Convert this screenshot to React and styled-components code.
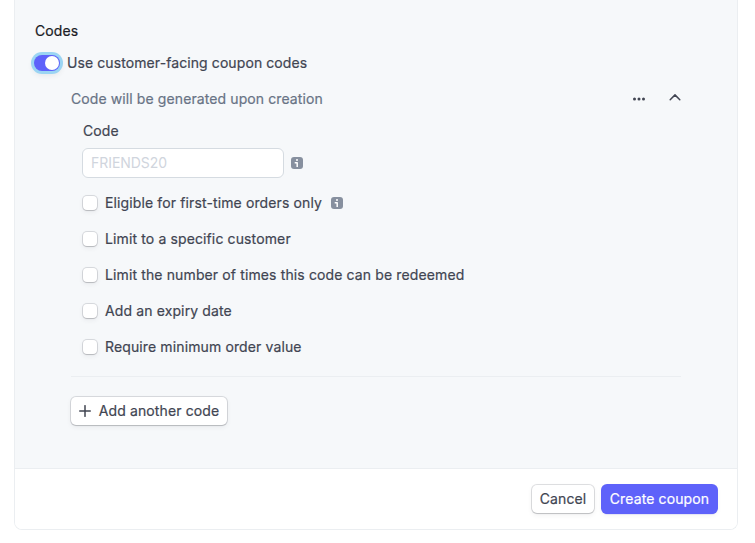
import React from "react";
import styled, { createGlobalStyle } from "styled-components";

const GlobalStyle = createGlobalStyle`
  * { box-sizing: border-box; }
  body {
    margin: 0;
    background: #fff;
    color: #414552;
    font: 400 14px/20px Inter, sans-serif;
    letter-spacing: 0.125px;
    -webkit-text-stroke: 0.2px currentColor;
    -webkit-font-smoothing: antialiased;
  }
`;

const Page = styled.div`
  height: 543px;
  padding: 0 17px 13px 14px;
  overflow: hidden;
`;

const Panel = styled.main`
  height: 530px;
  display: flex;
  flex-direction: column;
  border: 1px solid #ebeef1;
  border-top: 0;
  border-radius: 0 0 8px 8px;
  overflow: hidden;
`;

const Content = styled.section`
  height: 468px;
  padding: 21px 56px 0 20px;
  background: #f6f8fa;
`;

const Heading = styled.h2`
  margin: 0;
  font: inherit;
  color: #1a1b25;
`;

const ToggleRow = styled.label`
  display: flex;
  align-items: center;
  gap: 7px;
  height: 20px;
  margin-top: 12px;
  margin-left: -1px;
  letter-spacing: 0.09px;
`;

const Toggle = styled.button`
  display: flex;
  justify-content: flex-end;
  width: 26px;
  height: 16px;
  padding: 1px;
  border: 0;
  border-radius: 8px;
  background: #5e62fa;
  box-shadow: 0 0 0 3px #9bd5f3, 0 3px 5px 2px rgba(64, 68, 82, 0.08);
`;

const Knob = styled.span`
  width: 14px;
  height: 14px;
  border-radius: 50%;
  background: #fff;
`;

const CodeList = styled.div`
  width: 610px;
  margin-left: 36px;
  margin-top: 16px;
`;

const CodeHeader = styled.div`
  display: flex;
  align-items: center;
  height: 20px;
  color: #687385;
  letter-spacing: 0.1px;
`;

const IconButton = styled.button`
  display: flex;
  align-items: center;
  justify-content: center;
  width: 12px;
  height: 12px;
  padding: 0;
  border: 0;
  background: none;
  color: #414552;
  margin-left: ${(p) => (p.$first ? "auto" : "24px")};
  svg { display: block; }
`;

const Fields = styled.div`
  height: 268px;
  padding: 12px 0 0 11px;
  border-bottom: 1px solid #ebeef1;
`;

const FieldLabel = styled.label`
  display: block;
  height: 20px;
  margin-left: 1px;
`;

const InputRow = styled.div`
  display: flex;
  align-items: center;
  gap: 7px;
  margin-top: 7px;
`;

const Input = styled.input`
  width: 202px;
  height: 30px;
  padding: 0 8px 1px;
  border: 1px solid #d5dbe1;
  border-radius: 6px;
  background: #fff;
  font: 400 14px/20px Inter, sans-serif;
  letter-spacing: -0.05px;
  -webkit-text-stroke: 0;
  outline: 0;
  &::placeholder { color: #d0d5dd; opacity: 1; }
`;

const Options = styled.div`
  display: grid;
  gap: 16px;
  margin-top: 15px;
`;

const Option = styled.label`
  display: flex;
  align-items: center;
  height: 20px;
`;

const Checkbox = styled.input`
  appearance: none;
  width: 14px;
  height: 14px;
  margin: 0 8px 0 1px;
  border-radius: 4px;
  background: #fff;
  box-shadow: 0 0 0 1px rgba(64, 68, 82, 0.16), 0 1px 1px rgba(0, 0, 0, 0.12), 0 2px 5px rgba(64, 68, 82, 0.08);
`;

const OptionInfo = styled.span`
  display: flex;
  margin-left: 9px;
`;

const Button = styled.button`
  display: flex;
  align-items: center;
  justify-content: center;
  width: ${(p) => p.$width}px;
  height: 28px;
  padding: 0;
  border: 0;
  border-radius: 5px;
  background: ${(p) => (p.$primary ? "#5e62fa" : "#fff")};
  color: ${(p) => (p.$primary ? "#fff" : "#414552")};
  box-shadow:
    0 0 0 1px ${(p) => (p.$primary ? "#5e62fa" : "rgba(64, 68, 82, 0.16)")},
    0 1px 1px ${(p) => (p.$primary ? "#5650df" : "rgba(0, 0, 0, 0.12)")},
    0 2px 5px rgba(64, 68, 82, 0.08);
  font: inherit;
  letter-spacing: inherit;
  white-space: nowrap;
`;

const AddButton = styled(Button)`
  gap: 8px;
  margin-top: 20px;
`;

const Footer = styled.footer`
  flex: 1;
  display: flex;
  align-items: center;
  justify-content: flex-end;
  gap: 8px;
  padding-right: 20px;
  border-top: 1px solid #ebeef1;
  background: #fff;
`;

function InfoIcon() {
  return (
    <svg width="12" height="12" viewBox="0 0 12 12" aria-hidden="true">
      <rect width="12" height="12" rx="3" fill="#87909f" />
      <circle cx="6" cy="3" r="1" fill="#fff" />
      <path d="M3.7 5.7h2.5V10" fill="none" stroke="#fff" strokeWidth="1.5" strokeLinejoin="round" />
    </svg>
  );
}

const options = [
  { label: "Eligible for first-time orders only", info: true },
  { label: "Limit to a specific customer" },
  { label: "Limit the number of times this code can be redeemed" },
  { label: "Add an expiry date" },
  { label: "Require minimum order value" },
];

export default function App() {
  return (
    <>
      <GlobalStyle />
      <Page>
        <Panel>
          <Content>
            <Heading>Codes</Heading>
            <ToggleRow>
              <Toggle type="button" role="switch" aria-checked="true"><Knob /></Toggle>
              <span>Use customer-facing coupon codes</span>
            </ToggleRow>
            <CodeList>
              <CodeHeader>
                <span>Code will be generated upon creation</span>
                <IconButton $first aria-label="More options">
                  <svg width="12" height="12" viewBox="0 0 12 12" fill="currentColor">
                    <circle cx="1.5" cy="6" r="1.5" />
                    <circle cx="6" cy="6" r="1.5" />
                    <circle cx="10.5" cy="6" r="1.5" />
                  </svg>
                </IconButton>
                <IconButton aria-label="Collapse">
                  <svg width="12" height="12" viewBox="0 0 12 12" fill="none" stroke="currentColor" strokeWidth="1.5" strokeLinecap="round" strokeLinejoin="round">
                    <path d="M1.2 6.7 6 1.9l4.8 4.8" />
                  </svg>
                </IconButton>
              </CodeHeader>
              <Fields>
                <FieldLabel htmlFor="code">Code</FieldLabel>
                <InputRow>
                  <Input id="code" placeholder="FRIENDS20" />
                  <InfoIcon />
                </InputRow>
                <Options>
                  {options.map((o) => (
                    <Option key={o.label}>
                      <Checkbox type="checkbox" />
                      <span>{o.label}</span>
                      {o.info && <OptionInfo><InfoIcon /></OptionInfo>}
                    </Option>
                  ))}
                </Options>
              </Fields>
              <AddButton $width={156}>
                <svg width="12" height="12" viewBox="0 0 12 12" fill="none" stroke="currentColor" strokeWidth="1.5" strokeLinecap="round">
                  <path d="M6 .7v10.6M.7 6h10.6" />
                </svg>
                Add another code
              </AddButton>
            </CodeList>
          </Content>
          <Footer>
            <Button $width={62}>Cancel</Button>
            <Button $width={115} $primary>Create coupon</Button>
          </Footer>
        </Panel>
      </Page>
    </>
  );
}
